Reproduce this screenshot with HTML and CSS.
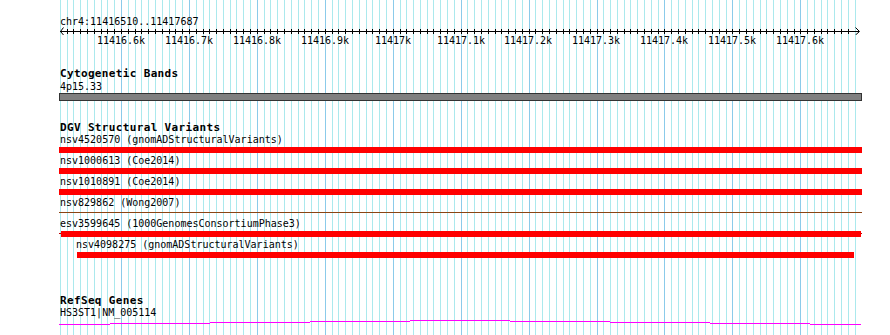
FILE: index.html
```html
<!DOCTYPE html>
<html>
<head>
<meta charset="utf-8">
<title>Genome view</title>
<link rel="stylesheet" href="styles.css">
</head>
<body>
<svg class="grid" id="grid" width="890" height="335" aria-hidden="true"></svg>
<main class="view">
  <section class="ruler">
    <div class="loc">chr4:11416510..11417687</div>
    <svg class="scale" id="scale" width="890" height="8">
      <rect class="axis" x="60" y="4" width="799" height="1"></rect>
      <polyline class="arrow" points="63.5,0.5 60.5,4.5 63.5,8"></polyline>
      <polyline class="arrow" points="855.5,0.5 859.5,4.5 855.5,8"></polyline>
    </svg>
    <div class="ticklabels">
      <span class="tl" style="left:121px">11416.6k</span>
      <span class="tl" style="left:189px">11416.7k</span>
      <span class="tl" style="left:257px">11416.8k</span>
      <span class="tl" style="left:325px">11416.9k</span>
      <span class="tl" style="left:393px">11417k</span>
      <span class="tl" style="left:461px">11417.1k</span>
      <span class="tl" style="left:528px">11417.2k</span>
      <span class="tl" style="left:596px">11417.3k</span>
      <span class="tl" style="left:664px">11417.4k</span>
      <span class="tl" style="left:732px">11417.5k</span>
      <span class="tl" style="left:800px">11417.6k</span>
    </div>
  </section>

  <section class="track cyto">
    <h2 class="title">Cytogenetic Bands</h2>
    <div class="label">4p15.33</div>
    <div class="band"></div>
  </section>

  <section class="track dgv">
    <h2 class="title">DGV Structural Variants</h2>
    <div class="row">
      <div class="label">nsv4520570 (gnomADStructuralVariants)</div>
      <div class="bar"></div>
    </div>
    <div class="row">
      <div class="label">nsv1000613 (Coe2014)</div>
      <div class="bar"></div>
    </div>
    <div class="row">
      <div class="label">nsv1010891 (Coe2014)</div>
      <div class="bar"></div>
    </div>
    <div class="row">
      <div class="label">nsv829862 (Wong2007)</div>
      <div class="bar thin"></div>
    </div>
    <div class="row">
      <div class="label">esv3599645 (1000GenomesConsortiumPhase3)</div>
      <div class="bar esv"></div>
    </div>
    <div class="row indent">
      <div class="label">nsv4098275 (gnomADStructuralVariants)</div>
      <div class="bar"></div>
    </div>
  </section>

  <section class="track refseq">
    <h2 class="title">RefSeq Genes</h2>
    <div class="label">HS3ST1|NM_005114</div>
    <svg class="gene" width="803" height="8" aria-hidden="true">
      <rect x="0" y="6" width="51" height="1"></rect>
      <rect x="51" y="5" width="100" height="1"></rect>
      <rect x="151" y="4" width="100" height="1"></rect>
      <rect x="251" y="3" width="100" height="1"></rect>
      <rect x="351" y="2" width="100" height="1"></rect>
      <rect x="451" y="3" width="100" height="1"></rect>
      <rect x="551" y="4" width="100" height="1"></rect>
      <rect x="651" y="5" width="100" height="1"></rect>
      <rect x="751" y="6" width="51" height="1"></rect>
    </svg>
  </section>
</main>
<script src="script.js"></script>
</body>
</html>
```

FILE: styles.css
```css
html, body {
  margin: 0;
  padding: 0;
  background: #ffffff;
}
body {
  position: relative;
  width: 890px;
  height: 335px;
  overflow: hidden;
  font-family: "DejaVu Sans Mono", "Liberation Mono", monospace;
  font-size: 10px;
  color: #000;
}
.grid {
  position: absolute;
  left: 0;
  top: 0;
}
.grid .minor { fill: #abe9ed; }
.grid .major { fill: #8bcbea; }

.view {
  position: relative;
  width: 890px;
  height: 335px;
  padding-top: 16px;
  box-sizing: border-box;
}

.loc {
  margin-left: 60px;
  height: 11px;
  line-height: 11px;
  white-space: nowrap;
}
.scale {
  display: block;
}
.scale .axis, .scale .tick { fill: #000; }
.scale .arrow {
  fill: none;
  stroke: #000;
  stroke-width: 1;
}
.ticklabels {
  position: relative;
  height: 11px;
}
.tl {
  position: absolute;
  top: 0;
  transform: translateX(-50%);
  line-height: 11px;
  white-space: nowrap;
}

.track {
  padding-left: 60px;
}
.title {
  margin: 0;
  height: 12px;
  font-size: 11px;
  line-height: 12px;
  font-weight: bold;
  letter-spacing: 0.35px;
  white-space: nowrap;
}
.label {
  height: 11px;
  line-height: 11px;
  white-space: nowrap;
}

.cyto { margin-top: 22px; }
.cyto .label { margin-top: 1px; }
.band {
  margin: 1px 0 0 -1px;
  width: 803px;
  height: 8px;
  box-sizing: border-box;
  border: 1px solid #333;
  background: #808080;
}

.dgv { margin-top: 21px; }
.row {
  height: 21px;
}
.bar {
  margin: 2px 0 0 -1px;
  width: 803px;
  height: 6px;
  background: #ff0000;
}
.bar.thin {
  position: relative;
  background: none;
}
.bar.thin::before {
  content: "";
  position: absolute;
  left: 0;
  right: 0;
  top: 2px;
  height: 1px;
  background: #8b4513;
}
.bar.esv {
  position: relative;
  background: none;
}
.bar.esv::before {
  content: "";
  position: absolute;
  left: 0;
  right: 0;
  top: 2px;
  height: 1px;
  background: #c00000;
}
.bar.esv::after {
  content: "";
  position: absolute;
  left: 2px;
  right: 1px;
  top: 0;
  bottom: 0;
  background: #ff0000;
}
.row.indent .label { margin-left: 16px; }
.row.indent .bar {
  margin-left: 17px;
  width: 777px;
}

.refseq { margin-top: 35px; }
.gene {
  display: block;
  margin-left: -1px;
}
.gene rect { fill: #ff00ff; }
```

FILE: script.js
```js
(function () {
  var NS = 'http://www.w3.org/2000/svg';
  var grid = document.getElementById('grid');
  var scale = document.getElementById('scale');
  for (var k = 0; k <= 117; k++) {
    var x = Math.round(59.86 + 6.793 * k);
    var r = document.createElementNS(NS, 'rect');
    r.setAttribute('x', x);
    r.setAttribute('y', 0);
    r.setAttribute('width', 1);
    r.setAttribute('height', 335);
    r.setAttribute('class', k % 10 === 9 ? 'major' : 'minor');
    grid.appendChild(r);
    if (k >= 1 && k <= 116) {
      var t = document.createElementNS(NS, 'rect');
      t.setAttribute('x', x);
      t.setAttribute('y', 2);
      t.setAttribute('width', 1);
      t.setAttribute('height', 5);
      t.setAttribute('class', 'tick');
      scale.appendChild(t);
    }
  }
})();
```
